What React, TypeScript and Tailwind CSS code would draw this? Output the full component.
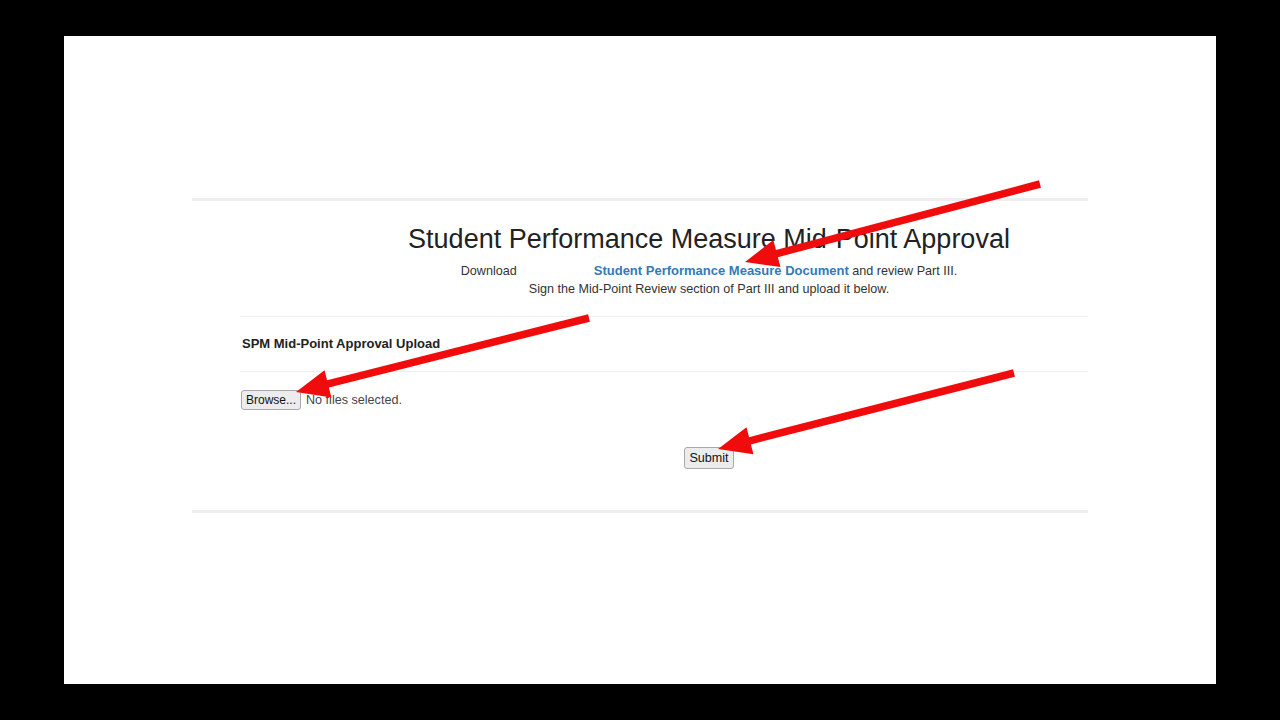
import React from 'react';

type Pt = [number, number];

// red annotation arrow: shaft from `from`, head ending at `to`
function Arrow({ from, to }: { from: Pt; to: Pt }) {
  const dx = to[0] - from[0];
  const dy = to[1] - from[1];
  const len = Math.hypot(dx, dy);
  const ux = dx / len;
  const uy = dy / len;
  const head = 33;
  const half = 14;
  const bx = to[0] - ux * head;
  const by = to[1] - uy * head;
  const nx = -uy;
  const ny = ux;
  const pts = `${to[0]},${to[1]} ${bx + nx * half},${by + ny * half} ${bx - nx * half},${by - ny * half}`;
  return (
    <g>
      <line x1={from[0]} y1={from[1]} x2={bx + ux * 2} y2={by + uy * 2} stroke="#f00c0c" strokeWidth={7.5} />
      <polygon points={pts} fill="#f00c0c" />
    </g>
  );
}

export default function App() {
  return (
    <div className="relative h-[720px] w-[1280px] bg-black px-16 py-9 font-['Liberation_Sans',Arial,sans-serif] text-[#333]">
      <div className="h-full w-full bg-white pt-[162px]">
        <div className="ml-32 w-[896px]">
          <div className="h-[3px] bg-[#eeeeee]" />

          <div className="pl-[138px] text-center">
            <h1 className="mt-[22px] text-[27px] leading-[32px] text-[#222]">
              Student Performance Measure Mid-Point Approval
            </h1>
            <p className="mt-[7px] text-[12.6px] leading-[18px]">
              Download<span className="inline-block w-[77px]" />
              <a className="text-[13px] font-bold text-[#337ab7]">Student Performance Measure Document</a> and review Part III.
            </p>
            <p className="text-[12.6px] leading-[18px]">
              Sign the Mid-Point Review section of Part III and upload it below.
            </p>
          </div>

          <div className="ml-12">
            <div className="mt-[18px] h-px bg-[#eeeeee]" />
            <div className="flex h-[54px] items-center pl-[2px] text-[13px] font-bold text-[#222]">
              SPM Mid-Point Approval Upload
            </div>
            <div className="h-px bg-[#eeeeee]" />

            <div className="mt-[18px] flex items-center gap-[5px] text-[12.6px]">
              <button className="ml-px h-[20px] rounded-[3px] border border-[#a9a9a9] bg-[#ececec] px-[4px] text-[12px] leading-none text-[#111]">
                Browse...
              </button>
              <span className="text-[#444]">No files selected.</span>
            </div>
          </div>

          <div className="mt-[37px] flex justify-center pl-[138px]">
            <button className="h-[22px] rounded-[3px] border border-[#a9a9a9] bg-[#ececec] px-[4px] text-[12.6px] leading-none text-[#111]">
              Submit
            </button>
          </div>

          <div className="mt-[41px] h-[3px] bg-[#eeeeee]" />
        </div>
      </div>

      <svg className="pointer-events-none absolute left-0 top-0" width={1280} height={720}>
        <Arrow from={[1040, 184]} to={[745, 262]} />
        <Arrow from={[589, 318]} to={[296, 392]} />
        <Arrow from={[1014, 373]} to={[718, 449]} />
      </svg>
    </div>
  );
}
